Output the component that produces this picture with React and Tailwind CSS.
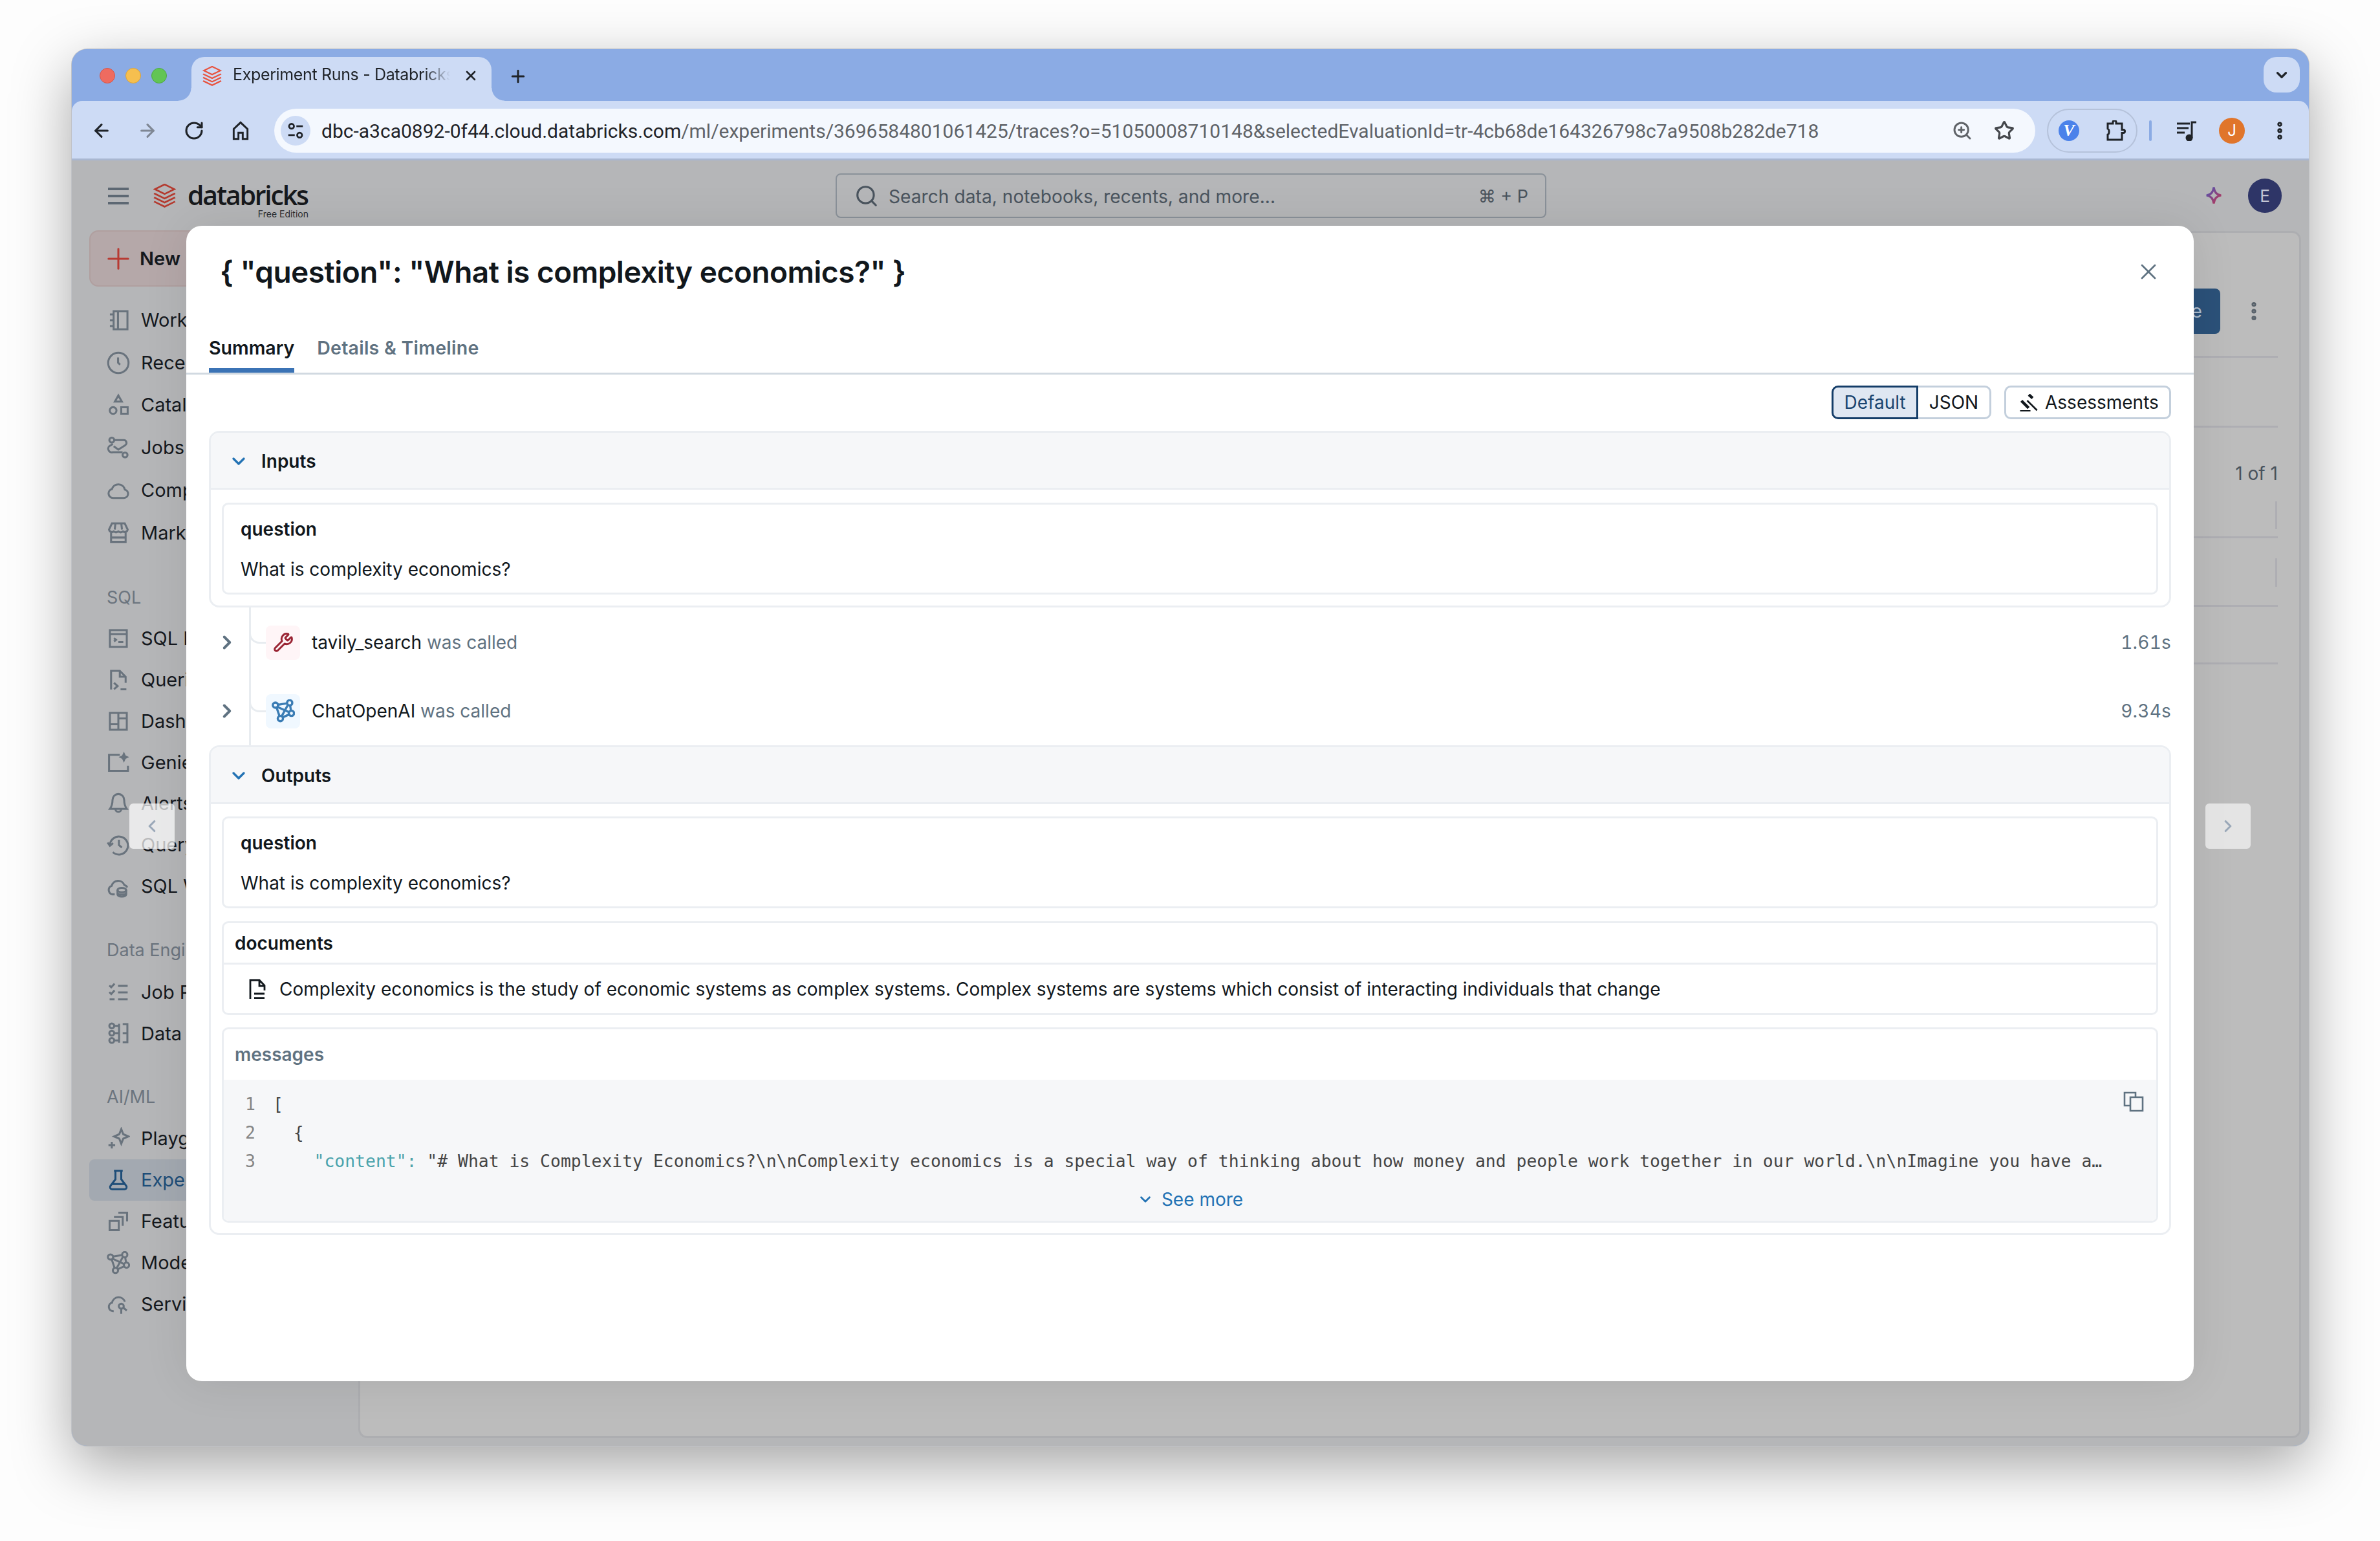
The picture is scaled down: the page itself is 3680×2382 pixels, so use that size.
import { ArrowLeft, ArrowRight, ChevronDown, ChevronLeft, ChevronRight, EllipsisVertical, Plus, RotateCw, Search, Star, Wrench, X, ZoomIn } from "lucide-react";

// 16-unit icon wrapper, same stroke as the product icons
function Ico({ children, className = "w-[32px] h-[32px] text-[#69737d]", sw = 1.5 }) {
  return (
    <svg viewBox="0 0 16 16" fill="none" stroke="currentColor" strokeWidth={sw} className={`shrink-0 ${className}`}>
      {children}
    </svg>
  );
}

function BrickLogo({ className }) {
  return (
    <svg viewBox="1 1 28 35" preserveAspectRatio="none" fill="none" stroke="currentColor" strokeWidth="2.4" className={className}>
      <path d="M15 2 L27 9 L15 16 L3 9 Z" />
      <path d="M2 15 L15 22.5 L28 15" />
      <path d="M2 21 L15 28.5 L28 21" />
      <path d="M2 27 L15 34.5 L28 27" />
    </svg>
  );
}

function NetPaths() {
  return (
    <>
      <circle cx="2.6" cy="4" r="1.8" />
      <circle cx="12.4" cy="2.4" r="1.8" />
      <circle cx="13.6" cy="9.6" r="1.8" />
      <circle cx="6" cy="13.2" r="1.8" />
      <path d="M4.4 3.7 10.6 2.7M4 5.2l7.9 3.6M3.4 5.6 5.4 11.5M12.7 4.2l.6 3.6M11.2 3.8l-4.3 7.8M12 10.4l-4.4 2" />
    </>
  );
}

const icons = {
  workspace: <path d="M4.75 1.75h9.5v12.5h-9.5zM7.75 1.75v12.5M2.2 4h2.5M2.2 8h2.5M2.2 12h2.5" />,
  recents: <><circle cx="8" cy="8" r="7" /><path d="M7.8 4.2v3.6l1.4 1.4" /></>,
  catalog: <><path d="M8 1.5l2.4 4.2H5.6z" /><circle cx="4.4" cy="11.8" r="2.3" /><path d="M10 9.6h4.4v4.4H10z" /></>,
  jobs: <><circle cx="3.5" cy="2.8" r="1.7" /><circle cx="12.6" cy="13" r="1.7" /><path d="M5.2 2.8h6.6a1.9 1.9 0 0 1 .9 3.5L8 9.3 4.8 7M4.2 5.4 2.9 6.3a2.2 2.2 0 0 0 1.2 4.8h6.8" /></>,
  compute: <path d="M4.3 13.2h7.6a2.9 2.9 0 0 0 .6-5.7 4.6 4.6 0 0 0-8.900-.4 3.1 3.1 0 0 0 .7 6.1z" />,
  market: <path d="M3 7.500v7h10v-7M3.600 1.800h8.800L14.400 6a2 2 0 0 1-3.200 1.300A2.600 2.600 0 0 1 8 7.300a2.600 2.600 0 0 1-3.200 0A2 2 0 0 1 1.600 6zM6 1.800 5.500 6M10 1.800l.5 4.200M3 11.500h10" />,
  sqlEditor: <path d="M2.200 2.200h11.600v11.600H2.200zM2.200 5h11.600M5 7.800l1.400 1.100L5 10M8 10.400h3.400" />,
  queries: <path d="M3 10V1.800h6l4 4V10M9 1.800v4h4M3 14.500V10M5 10l2.500 2.200L5 14.400M9.500 14.400h4" />,
  dash: <path d="M2.200 2.200h11.600v11.600H2.200zM8 2.200v11.600M2.200 10H8M8 6h5.800" />,
  genie: <><path d="M9 3H1.600v11h13v-3.500" /><path d="M11.800.8 13 3.400l2.400 1.200L13 5.800l-1.200 2.600-1.200-2.600-2.400-1.200 2.400-1.200z" fill="currentColor" stroke="none" /></>,
  alerts: <path d="M8 1.500a4 4 0 0 0-4 4c0 3.600-1.800 6.200-1.800 6.200h11.600S12 9.100 12 5.500a4 4 0 0 0-4-4zM6 11.800a2 2 0 0 0 4 0" />,
  history: <path d="M2.200 8.500a6.200 6.200 0 1 1 2 4.500M.6 6.400l1.600 2.200 2.200-1.800M8.400 4.400v3.700l2 1.700" />,
  warehouse: <><path d="M5.500 13.500H4a3 3 0 0 1-.6-5.800 4.600 4.600 0 0 1 8.700-.6 2.800 2.800 0 0 1 2 1.700" /><ellipse cx="10.400" cy="10.600" rx="3" ry="1.500" /><path d="M7.400 10.600v3c0 .8 1.300 1.500 3 1.500s3-.7 3-1.500v-3M7.400 12.300c0 .8 1.300 1.400 3 1.400s3-.6 3-1.400" /></>,
  jobRuns: <path d="M1.800 3.200l1.300 1.300L5.400 2M7.800 3.500h6.600M1.800 7.800l1.300 1.300 2.300-2.500M7.800 8h6.600M2 12.800h3.400M7.800 12.800h6.600" />,
  ingest: <><circle cx="3.500" cy="3" r="1.700" /><circle cx="3.500" cy="8" r="1.700" /><circle cx="3.500" cy="13" r="1.700" /><path d="M5.500 3h3M5.500 8h3M5.500 13h3M8.500 1.500v13M11 1.800h3.200v12.400H11M11 8h3.200" /></>,
  play: <><path d="M10 1.500 11.400 5l3.500 1.500-3.500 1.500L10 11.500 8.600 8 5.100 6.500 8.600 5z" /><path d="M3.500 10.200v4.600M1.200 12.500h4.600" /></>,
  experiments: <path d="M5 1.700h6M6 1.700v5.800L2.600 12a1.400 1.400 0 0 0 1.100 2.300h8.600a1.400 1.400 0 0 0 1.100-2.300L10 7.500V1.700M3.800 10.800h8.400" />,
  features: <path d="M2 7.700h6.300V14H2zM5 5h6v6M8 2h6v6" />,
  models: <NetPaths />,
  serving: <><path d="M4.800 13.200H4.300a3 3 0 0 1-.6-5.900 4.600 4.600 0 0 1 8.800-.6" /><circle cx="10" cy="9.800" r="1.700" /><path d="M11.600 11l2.200 1.800M10 11.500V15" /></>,
};

function NavItem({ icon, label, active, h = "h-[63.8px]" }) {
  return (
    <div className={`flex items-center gap-[17px] rounded-[8px] pl-[27px] whitespace-nowrap text-[29px] ${h} ${active ? "bg-[#a3a9b1] text-[#1e4d78]" : "text-[#15191e]"}`}>
      <Ico sw={1.35} className={`w-[36px] h-[36px] ${active ? "text-[#1e4d78]" : "text-[#69737d]"}`}>{icons[icon]}</Ico>
      <span>{label}</span>
    </div>
  );
}

function NavLabel({ children, className }) {
  return <div className={`h-[40px] pl-[27px] text-[27px] leading-[40px] whitespace-nowrap text-[#6b747e] ${className}`}>{children}</div>;
}

function TabStrip() {
  return (
    <div className="h-[80px] shrink-0 flex items-start bg-[#8babe4] relative">
      <div className="flex gap-[16px] pl-[43px] pt-[29px]">
        <div className="w-[24px] h-[24px] rounded-full bg-[#ee6b60] border border-[#d4574c]" />
        <div className="w-[24px] h-[24px] rounded-full bg-[#f6bf4f] border border-[#d9a33c]" />
        <div className="w-[24px] h-[24px] rounded-full bg-[#62c554] border border-[#4ea943]" />
      </div>
      <div className="relative ml-[38px] mt-[12px] w-[464px] h-[68px] bg-[#cddbf5] rounded-t-[20px] flex items-center pl-[17px]">
        <div className="absolute left-[-20px] bottom-0 w-[20px] h-[20px] bg-[radial-gradient(circle_at_0_0,transparent_19px,#cddbf5_20px)]" />
        <div className="absolute right-[-20px] bottom-0 w-[20px] h-[20px] bg-[radial-gradient(circle_at_100%_0,transparent_19px,#cddbf5_20px)]" />
        <BrickLogo className="w-[30px] h-[31px] text-[#e8533f] shrink-0 -mt-[10px]" />
        <span className="ml-[17px] w-[336px] overflow-hidden whitespace-nowrap text-[25px] tracking-[-0.35px] text-[#1f2328] -mt-[12px] [mask-image:linear-gradient(90deg,#000_88%,transparent)]">Experiment Runs - Databricks</span>
        <X className="ml-[20px] w-[24px] h-[24px] text-[#1f2328] -mt-[10px]" strokeWidth={2.6} />
      </div>
      <Plus className="ml-[26px] mt-[27px] w-[30px] h-[30px] text-[#1f2328]" strokeWidth={2.4} />
      <div className="absolute right-[14px] top-[12px] w-[56px] h-[55px] rounded-[20px] bg-[#cddbf5] flex items-center justify-center">
        <ChevronDown className="w-[26px] h-[26px] text-[#1f2328]" strokeWidth={3} />
      </div>
    </div>
  );
}

function Toolbar() {
  return (
    <div className="h-[92px] shrink-0 bg-[#cddbf5] rounded-t-[16px] border-b-[3px] border-[#a9b7d1] flex items-center pt-[3px]">
      <ArrowLeft className="ml-[30px] w-[32px] h-[32px] text-[#1f2328]" strokeWidth={2.3} />
      <ArrowRight className="ml-[39px] w-[32px] h-[32px] text-[#7f8794]" strokeWidth={2.3} />
      <RotateCw className="ml-[40px] w-[32px] h-[32px] text-[#1f2328]" strokeWidth={2.3} />
      <svg viewBox="0 0 24 24" fill="none" stroke="#1f2328" strokeWidth="2.2" className="ml-[40px] w-[32px] h-[34px]">
        <path d="M4 21.500V10l8-7.500 8 7.500v11.500h-5.500v-7h-5v7z" />
      </svg>
      <div className="ml-[36px] w-[2723px] flex-none h-[68px] rounded-full bg-[#f4f8fe] flex items-center pl-[10px] pr-[32px]">
        <div className="w-[46px] h-[46px] rounded-full bg-[#cddbf5] flex items-center justify-center shrink-0">
          <svg viewBox="0 0 24 24" fill="none" stroke="#1f2328" strokeWidth="2.200" className="w-[30px] h-[30px]">
            <circle cx="7" cy="6.500" r="3" />
            <path d="M13 6.500h8M3 17.500h8" />
            <circle cx="17" cy="17.500" r="3" />
          </svg>
        </div>
        <div className="ml-[17px] flex-1 whitespace-nowrap text-[30px] text-[#5f6368] font-[Roboto,sans-serif]">
          <span className="text-[#1f2328]">dbc-a3ca0892-0f44.cloud.databricks.com</span>/ml/experiments/3696584801061425/traces?o=51050008710148&amp;selectedEvaluationId=tr-4cb68de164326798c7a9508b282de718
        </div>
        <ZoomIn className="w-[32px] h-[32px] text-[#5f6368] shrink-0 ml-[10px]" strokeWidth={2.2} />
        <Star className="ml-[33px] w-[32px] h-[32px] text-[#45484d] shrink-0" strokeWidth={2.4} />
      </div>
      <div className="ml-[18px] w-[140px] h-[68px] rounded-full border-[2px] border-[#b5c2da] flex items-center pl-[16px] shrink-0">
        <div className="w-[32px] h-[32px] rounded-full bg-[#4b82ea] flex items-center justify-center text-white text-[26px] font-bold italic font-['Liberation_Serif',serif] leading-none">V</div>
        <svg viewBox="0 0 32 32" fill="none" stroke="#1f2328" strokeWidth="3" className="ml-[40px] w-[32px] h-[32px]">
          <path d="M4 5h8V3a2.500 2.500 0 0 1 5 0v2h9v9.500h2a2.500 2.500 0 0 1 0 5h-2V30H4v-8a3.500 3.500 0 0 0 2-3v-3a3.500 3.500 0 0 0-2-3z" />
        </svg>
      </div>
      <div className="ml-[18px] w-[4px] h-[32px] rounded bg-[#8babe4]" />
      <svg viewBox="0 0 32 32" fill="none" stroke="#1f2328" strokeWidth="3" className="ml-[38px] w-[32px] h-[32px]">
        <path d="M1 5h20M1 12h18M1 19h12M24 27V3h7" />
        <circle cx="20" cy="27" r="4" fill="#1f2328" />
      </svg>
      <div className="ml-[34px] w-[40px] h-[40px] rounded-full bg-[#e0752b] flex items-center justify-center text-white text-[24px]">J</div>
      <EllipsisVertical className="ml-[37px] w-[34px] h-[34px] text-[#1f2328]" strokeWidth={3.2} />
    </div>
  );
}

function PageHeader() {
  return (
    <div className="h-[109px] shrink-0 flex items-center relative">
      <div className="ml-[56px] flex flex-col gap-[7px]">
        <div className="w-[32px] h-[4px] bg-[#5d6873]" />
        <div className="w-[32px] h-[4px] bg-[#5d6873]" />
        <div className="w-[32px] h-[4px] bg-[#5d6873]" />
      </div>
      <BrickLogo className="ml-[38px] w-[35px] h-[37px] text-[#b43a2f] shrink-0" />
      <div className="ml-[18px] relative h-[72px] w-[190px]">
        <div className="text-[41px] leading-[48px] font-semibold tracking-[-2.2px] text-[#17191c] font-['Open_Sans',sans-serif] mt-[10px]">databricks</div>
        <div className="absolute right-[3px] top-[55px] text-[14px] leading-[18px] text-[#2a2d31]">Free Edition</div>
      </div>
      <div className="absolute left-[1181px] top-[20px] w-[1099px] h-[69px] rounded-[8px] border-[2px] border-[#8a9199] flex items-center pl-[27px] pr-[26px]">
        <Search className="w-[38px] h-[38px] text-[#4a545e]" strokeWidth={2} />
        <span className="ml-[15px] flex-1 pt-[3px] text-[28.2px] text-[#4a545e]">Search data, notebooks, recents, and more...</span>
        <span className="pt-[3px] text-[27px] text-[#4a545e]">⌘ + P</span>
      </div>
      <svg viewBox="0 0 24 24" fill="none" strokeWidth="2.600" stroke="url(#spark)" className="absolute left-[3297px] top-[38px] w-[30px] h-[32px]">
        <defs>
          <linearGradient id="spark" x1="0" y1="0" x2="1" y2="1">
            <stop offset="0" stopColor="#4a55b8" />
            <stop offset="1" stopColor="#c0344f" />
          </linearGradient>
        </defs>
        <path d="M12 2c1 6 3 9 9 10-6 1-8 4-9 10-1-6-3-9-9-10 6-1 8-4 9-10z" />
      </svg>
      <div className="absolute left-[3365px] top-[28px] w-[52px] h-[53px] rounded-full bg-[#2e3567] flex items-center justify-center text-[26px] text-[#c3c5d4]">E</div>
    </div>
  );
}

function Sidebar() {
  return (
    <div className="w-[443px] shrink-0 -mt-[1px]">
      <div className="ml-[27px] h-[87px] w-[300px] rounded-[14px] border-[2px] border-[#b09f9f] bg-[#b5a8a9] flex items-center pl-[17px] gap-[7px]">
        <Plus className="w-[52px] h-[52px] text-[#b83a33]" strokeWidth={1.4} />
        <span className="text-[29px] font-semibold text-[#15191e]">New</span>
      </div>
      <div className="mr-[27px] pl-[27px] mt-[19px]">
        <NavItem icon="workspace" label="Workspace" h="h-[65.7px]" />
        <NavItem icon="recents" label="Recents" h="h-[65.7px]" />
        <NavItem icon="catalog" label="Catalog" h="h-[65.7px]" />
        <NavItem icon="jobs" label="Jobs & Pipelines" h="h-[65.7px]" />
        <NavItem icon="compute" label="Compute" h="h-[65.7px]" />
        <NavItem icon="market" label="Marketplace" h="h-[65.7px]" />
        <NavLabel className="mt-[48px] mb-[11px]">SQL</NavLabel>
        <NavItem icon="sqlEditor" label="SQL Editor" />
        <NavItem icon="queries" label="Queries" />
        <NavItem icon="dash" label="Dashboards" />
        <NavItem icon="genie" label="Genie" />
        <NavItem icon="alerts" label="Alerts" />
        <NavItem icon="history" label="Query History" />
        <NavItem icon="warehouse" label="SQL Warehouses" />
        <NavLabel className="mt-[47px] mb-[13px]">Data Engineering</NavLabel>
        <NavItem icon="jobRuns" label="Job Runs" />
        <NavItem icon="ingest" label="Data Ingestion" />
        <NavLabel className="mt-[47px] mb-[12px]">AI/ML</NavLabel>
        <NavItem icon="play" label="Playground" />
        <NavItem icon="experiments" label="Experiments" active />
        <NavItem icon="features" label="Features" />
        <NavItem icon="models" label="Models" />
        <NavItem icon="serving" label="Serving" />
      </div>
    </div>
  );
}

function BehindPanel() {
  return (
    <div className="w-[3004px] h-[1866px] rounded-[14px] border-[3px] border-[#adaeb1] bg-[#bcbcbc] flex flex-col pr-[33px] pl-[40px]">
      <div className="h-[159px] flex items-start justify-end pt-[86px]">
        <div className="w-[120px] h-[70px] rounded-[8px] bg-[#2b5179] flex items-center justify-end pr-[28px] text-[29px] text-[#aebccc]">Create</div>
        <EllipsisVertical className="ml-[34px] mr-[19px] mt-[17px] w-[36px] h-[36px] text-[#5a636c]" strokeWidth={2.800} />
      </div>
      <div className="h-[3px] bg-[#aeaeb3] mt-[31px]" />
      <div className="h-[3px] bg-[#aeaeb3] mt-[105px]" />
      <div className="mt-[53px] text-right text-[28px] leading-[36px] text-[#48525c]">1 of 1</div>
      <div className="self-end w-[3px] h-[43px] bg-[#aeaeb3] mt-[25px] mr-[1px]" />
      <div className="h-[3px] bg-[#aeaeb3] mt-[11px]" />
      <div className="self-end w-[3px] h-[44px] bg-[#aeaeb3] mt-[31px] mr-[1px]" />
      <div className="h-[3px] bg-[#aeaeb3] mt-[28px]" />
      <div className="h-[3px] bg-[#aeaeb3] mt-[86px]" />
    </div>
  );
}

function KeyValue({ name, value }) {
  return (
    <div className="h-[142px] rounded-[10px] border-[3px] border-[#ebeef2] pt-[20px] pl-[26px]">
      <div className="text-[28px] leading-[36px] font-semibold text-[#11171c]">{name}</div>
      <div className="mt-[26px] text-[28px] leading-[36px] text-[#11171c]">{value}</div>
    </div>
  );
}

function SpanPanel({ title, body, children }) {
  return (
    <div className="rounded-[16px] border-[3px] border-[#ebeef2]">
      <div className="h-[88px] rounded-t-[13px] bg-[#f6f7f9] border-b-[3px] border-[#ebeef2] flex items-center pl-[27px] pt-[2px]">
        <ChevronDown className="w-[32px] h-[32px] text-[#2272b4]" strokeWidth={2.500} />
        <span className="ml-[19px] text-[28px] font-semibold text-[#11171c]">{title}</span>
      </div>
      <div className={`px-[17px] flex flex-col ${body}`}>{children}</div>
    </div>
  );
}

function TreeRow({ icon, box, name, time }) {
  return (
    <div className="relative h-[106px] flex items-center pt-[2px]">
      <div className="absolute left-[62px] top-[32px] w-[26px] h-[24px] rounded-bl-[16px] border-l-[3px] border-b-[3px] border-[#e8ecf0]" />
      <ChevronRight className="ml-[11px] w-[34px] h-[34px] text-[#5f7281]" strokeWidth={2.800} />
      <div className={`ml-[43px] w-[53px] h-[53px] rounded-[8px] flex items-center justify-center ${box}`}>{icon}</div>
      <div className="ml-[18px] flex-1 text-[28px] text-[#11171c]">
        {name} <span className="text-[#5f7281]">was called</span>
      </div>
      <div className="text-[28px] tabular-nums tracking-[0.2px] text-[#5f7281]">{time}</div>
    </div>
  );
}

function CodeBlock() {
  const line3 = '"# What is Complexity Economics?\\n\\nComplexity economics is a special way of thinking about how money and people work together in our world.\\n\\nImagine you have a…';
  return (
    <div className="relative h-[218px] bg-[#f6f7f9] rounded-b-[8px] pt-[16px] font-['DejaVu_Sans_Mono',monospace] text-[26.4px] leading-[44px] text-[#454545] whitespace-pre">
      <div className="flex"><span className="w-[49px] shrink-0 text-right text-[#858585]">1</span><span className="ml-[27px]">[</span></div>
      <div className="flex"><span className="w-[49px] shrink-0 text-right text-[#858585]">2</span><span className="ml-[27px]">  {"{"}</span></div>
      <div className="flex">
        <span className="w-[49px] shrink-0 text-right text-[#858585]">3</span>
        <span className="ml-[27px]">    <span className="text-[#4aa3ac]">"content":</span> {line3}</span>
      </div>
      <div className="absolute right-[19px] top-[18px]">
        <Ico className="w-[32px] h-[32px] text-[#5f7281]" sw={1.300}>
          <path d="M9.500 4.500V1H1v10h4.500" />
          <path d="M5.500 4.500H15V15H5.500z" />
        </Ico>
      </div>
      <div className="absolute left-0 right-0 bottom-[15px] flex items-center justify-center gap-[12px] font-['Inter',sans-serif] text-[28px] leading-[36px] text-[#2272b4]">
        <ChevronDown className="w-[26px] h-[26px]" strokeWidth={2.500} />
        <span>See more</span>
      </div>
    </div>
  );
}

function Modal() {
  return (
    <div className="absolute left-[177px] top-[273px] w-[3104px] h-[1786px] rounded-[24px] bg-white shadow-[0_0_70px_rgba(0,0,0,0.09)] flex flex-col font-['Inter',sans-serif]">
      <div className="h-[142px] shrink-0 flex items-center justify-between pl-[52px] pr-[50px]">
        <h1 className="text-[46px] tracking-[-0.5px] font-semibold text-[#11171c]">{'{ "question": "What is complexity economics?" }'}</h1>
        <X className="w-[40px] h-[40px] text-[#5f7281]" strokeWidth={1.600} />
      </div>
      <div className="shrink-0 flex gap-[35px] pl-[35px] border-b-[3px] border-[#d1d9e1]">
        <div className="pt-[29px] pb-[13px] leading-[36px] text-[28.5px] font-semibold text-[#11171c] border-b-[7px] border-[#3b73b5]">Summary</div>
        <div className="pt-[29px] pb-[13px] leading-[36px] text-[28.5px] tracking-[0.25px] font-semibold text-[#5f7281] border-b-[7px] border-transparent">Details &amp; Timeline</div>
      </div>
      <div className="px-[35px]">
        <div className="mt-[17px] mb-[18px] h-[52px] flex justify-end text-[28px]">
          <div className="w-[134px] rounded-l-[10px] border-[3px] border-[#143d68] bg-[#dfe7f2] text-[#1a4570] flex items-center justify-center">Default</div>
          <div className="w-[113px] rounded-r-[10px] border-[3px] border-l-0 border-[#c3cfdc] text-[#11171c] flex items-center justify-center">JSON</div>
          <div className="ml-[20px] w-[258px] rounded-[10px] border-[3px] border-[#c3cfdc] text-[#11171c] flex items-center pl-[21px] gap-[11px]">
            <svg viewBox="0 0 16 16" fill="none" stroke="#11171c" className="w-[28px] h-[27px]">
              <path d="M8 .6l3.500 3.200M1.200 6.200 7.800 12.800" strokeWidth="2.600" />
              <path d="M6.500 6 15.500 15M0 15.600h9.500" strokeWidth="1.600" />
            </svg>
            <span>Assessments</span>
          </div>
        </div>
        <SpanPanel title="Inputs" body="pt-[20px] pb-[17px]">
          <KeyValue name="question" value="What is complexity economics?" />
        </SpanPanel>
        <div className="relative h-[213px]">
          <div className="absolute left-[62px] top-0 bottom-0 w-[3px] bg-[#e8ecf0]" />
          <TreeRow
            box="bg-[#fff5f7]"
            icon={<Wrench className="w-[32px] h-[32px] text-[#9a2433]" strokeWidth={2.200} />}
            name="tavily_search"
            time="1.61s"
          />
          <TreeRow
            box="bg-[#f0f8ff]"
            icon={<Ico className="w-[36px] h-[36px] text-[#3a7cb4]"><NetPaths /></Ico>}
            name="ChatOpenAI"
            time="9.34s"
          />
        </div>
        <SpanPanel title="Outputs" body="pt-[19px] pb-[16px] gap-[19px]">
          <KeyValue name="question" value="What is complexity economics?" />
          <div className="h-[145px] mt-[1px] rounded-[10px] border-[3px] border-[#ebeef2]">
            <div className="h-[64px] border-b-[3px] border-[#ebeef2] pl-[17px] flex items-center text-[28px] font-semibold text-[#11171c]">documents</div>
            <div className="h-[75px] flex items-center pl-[36px] text-[28px] text-[#11171c]">
              <Ico className="w-[32px] h-[34px] text-[#11171c]" sw={1.400}>
                <path d="M2.500 15.500V1h7l4 4.200V9M9.500 1v4.500h4M5.500 11.500h8M5.500 14.800h8" />
              </Ico>
              <span className="ml-[18px] tracking-[0.02px]">Complexity economics is the study of economic systems as complex systems. Complex systems are systems which consist of interacting individuals that change</span>
            </div>
          </div>
          <div className="h-[302px] rounded-[10px] border-[3px] border-[#ebeef2] overflow-hidden">
            <div className="h-[78px] pl-[17px] flex items-center text-[28px] font-semibold text-[#5f7281]">messages</div>
            <CodeBlock />
          </div>
        </SpanPanel>
      </div>
    </div>
  );
}

export default function App() {
  return (
    <div className="w-[3680px] h-[2382px] overflow-hidden bg-[#fdfdfd] pt-[76px] pl-[111px] font-['Inter',sans-serif]">
      <div className="relative w-[3459px] h-[2159px] rounded-[24px] overflow-hidden flex flex-col bg-[#8babe4] shadow-[0_0_0_1px_#c0c2c6,0_30px_90px_rgba(0,0,0,0.35)]">
        <TabStrip />
        <Toolbar />
        <div className="flex-1 min-h-0 flex flex-col bg-[#b5b6b8]">
          <PageHeader />
          <div className="flex flex-1 min-h-0">
            <Sidebar />
            <BehindPanel />
          </div>
        </div>
        <Modal />
        <div className="absolute left-[89px] top-[1166px] w-[70px] h-[70px] rounded-[6px] bg-white/70 flex items-center justify-center">
          <ChevronLeft className="w-[30px] h-[30px] text-[#9aa8b8]" strokeWidth={2.500} />
        </div>
        <div className="absolute left-[3299px] top-[1166px] w-[70px] h-[70px] rounded-[6px] bg-white/60 flex items-center justify-center">
          <ChevronRight className="w-[30px] h-[30px] text-[#9aa8b8]" strokeWidth={2.500} />
        </div>
      </div>
    </div>
  );
}
